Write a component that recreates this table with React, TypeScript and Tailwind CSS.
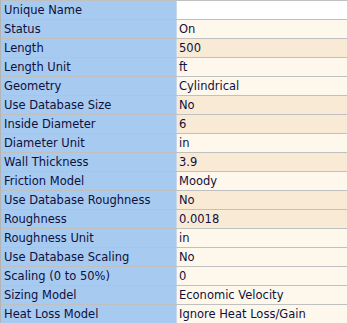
import React from "react";

type Row = { label: string; value: string; bg: "white" | "cream" | "peach" };

const rows: Row[] = [
  { label: "Unique Name", value: "", bg: "white" },
  { label: "Status", value: "On", bg: "cream" },
  { label: "Length", value: "500", bg: "peach" },
  { label: "Length Unit", value: "ft", bg: "cream" },
  { label: "Geometry", value: "Cylindrical", bg: "cream" },
  { label: "Use Database Size", value: "No", bg: "peach" },
  { label: "Inside Diameter", value: "6", bg: "peach" },
  { label: "Diameter Unit", value: "in", bg: "cream" },
  { label: "Wall Thickness", value: "3.9", bg: "peach" },
  { label: "Friction Model", value: "Moody", bg: "cream" },
  { label: "Use Database Roughness", value: "No", bg: "peach" },
  { label: "Roughness", value: "0.0018", bg: "peach" },
  { label: "Roughness Unit", value: "in", bg: "cream" },
  { label: "Use Database Scaling", value: "No", bg: "cream" },
  { label: "Scaling (0 to 50%)", value: "0", bg: "cream" },
  { label: "Sizing Model", value: "Economic Velocity", bg: "cream" },
  { label: "Heat Loss Model", value: "Ignore Heat Loss/Gain", bg: "cream" },
];

export default function App() {
  return (
    <div
      className="w-[347px] h-[323px] overflow-hidden bg-white border-l border-[#b4b4b4] text-[11.5px] text-[#10103c]"
      style={{ fontFamily: '"DejaVu Sans", Verdana, sans-serif' }}
    >
      {rows.map((r) => (
        <div key={r.label} className="flex h-[19px] border-t border-[#c0c0c0]">
          <div className="w-[175px] h-[18px] bg-[#a6caf0] pl-[3px] leading-[18px] whitespace-nowrap overflow-hidden">
            {r.label}
          </div>
          <div className="w-px h-[18px] bg-[#c8d8e8]" />
          <div
            className={
              "flex-1 h-[18px] pl-[2px] leading-[18px] whitespace-nowrap overflow-hidden " +
              (r.bg === "white"
                ? "bg-white"
                : r.bg === "peach"
                ? "bg-[#f9ead6]"
                : "bg-[#fef8ec]")
            }
          >
            {r.value}
          </div>
        </div>
      ))}
    </div>
  );
}
